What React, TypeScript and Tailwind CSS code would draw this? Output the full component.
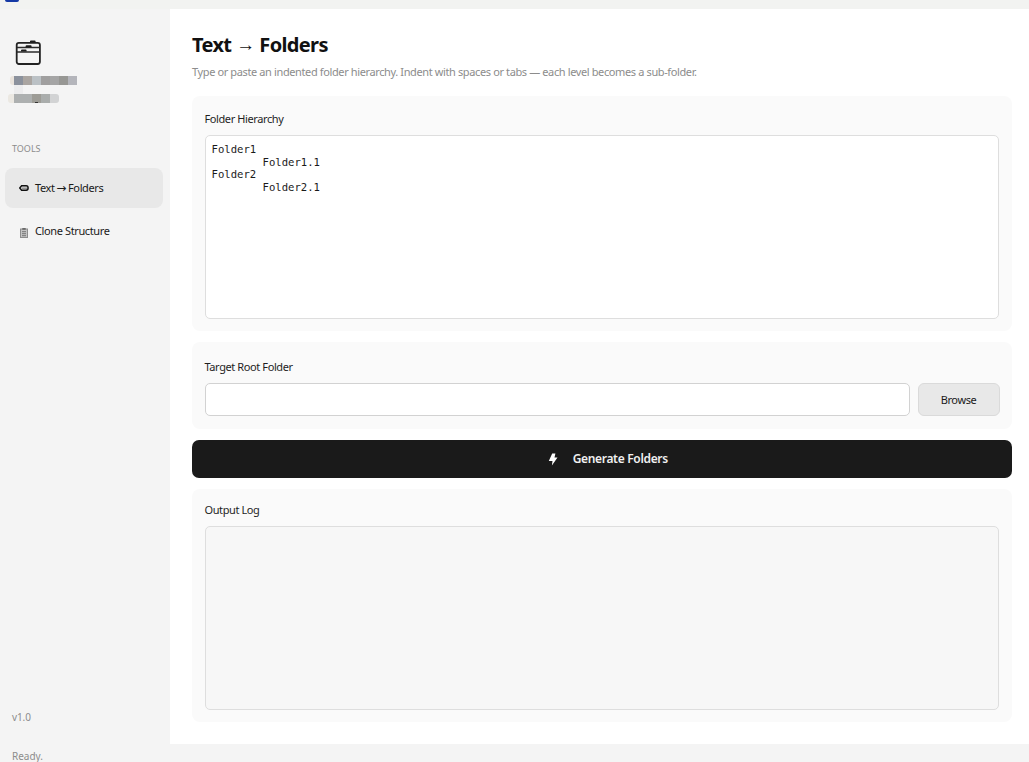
import React, { useState } from 'react';

interface Tool {
    id: string;
    label: React.ReactNode;
    icon: React.ReactNode;
}

interface CardProps {
    title: string;
    className: string;
    children: React.ReactNode;
}

const DividerIcon = () => (
    <svg width="26" height="26" viewBox="0 0 26 26" fill="none" className="mt-[31px] ml-[15px] block">
        <rect x="1.7" y="2.9" width="23.2" height="21.1" rx="2.2" stroke="#222" strokeWidth="1.8"/>
        <path d="M2 7.5h22.6M2 11.9h22.6" stroke="#2a2a2a" strokeWidth="1.5"/>
        <path d="M15 2.4V1.2Q15 .4 16 .4h3.6q1 0 1 .8v1.2zM10.6 7.2v-1q0-.9 1-.9h4q1 0 1 .9v1zM6 11.4v-1q0-.9 1-.9h3.6q1 0 1 .9v1z" fill="#1c1c1c"/>
    </svg>
);

const PencilIcon = () => (
    <svg width="10" height="6" viewBox="0 0 10 6" fill="none">
        <path d="M2.6.8h4.6c1 0 1.9 1 1.9 2.2s-.9 2.2-1.9 2.2H2.6L.7 3z" fill="#d8d8d8" stroke="#111" strokeWidth="1.5"/>
        <path d="M3 3.2h5" stroke="#555" strokeWidth=".7"/>
    </svg>
);

const ClipboardIcon = () => (
    <svg width="8" height="10" viewBox="0 0 8 10" fill="none" className="mt-[3px] ml-px">
        <rect x=".5" y="1" width="7" height="8.5" fill="#c4c4c4" stroke="#8d8d8d"/>
        <path d="M2.3.9h3.4" stroke="#606060" strokeWidth="1.6"/>
        <path d="M2 3.7h4M2 5.7h4M2 7.7h4" stroke="#6d6d6d" strokeWidth=".9"/>
    </svg>
);

const BoltIcon = () => (
    <svg width="10" height="13" viewBox="0 0 10 13">
        <path d="M4.2.5h3.2L6.5 4.6h3L3.9 12.6l.6-4.7H.8z" fill="#fff"/>
    </svg>
);

const tools: Tool[] = [
    {
        id: 'text',
        label: <>Text <span className="mx-[-0.8px] inline-block font-['DejaVu_Sans',sans-serif] text-[12px] leading-none tracking-normal">→</span> Folders</>,
        icon: <PencilIcon/>,
    },
    { id: 'clone', label: 'Clone Structure', icon: <ClipboardIcon/> },
];

const Card: React.FC<CardProps> = ({ title, className, children }) => (
    <section className={`rounded-[8px] bg-[#fafafa] px-[12.5px] ${className}`}>
        <h2 className="h-4 text-[11px] leading-4 tracking-[-0.4px] text-[#1f1f1f]">{title}</h2>
        {children}
    </section>
);

const Brand = () => (
    <div className="mt-[10px] h-[27px]">
        <div className="ml-[10px] flex h-[9px] w-[67px] overflow-hidden rounded-l-[3px]">
            <span className="w-1 bg-[#e9e3dc]"/>
            <span className="w-[9px] bg-[#8b919c]"/>
            <span className="w-[9px] bg-[#aaa5a1]"/>
            <span className="w-[9px] bg-[#bbc1c5]"/>
            <span className="w-[9px] bg-[#a09f9f]"/>
            <span className="w-[9px] bg-[#a5a5a5]"/>
            <span className="w-[9px] bg-[#979794]"/>
            <span className="w-[9px] bg-[#b4b5bb]"/>
        </div>
        <div className="ml-[14px] h-[9px] w-[9px] bg-[#ececed]"/>
        <div className="ml-[8px] flex h-[9px] w-[51px] overflow-hidden rounded-[3px]">
            <span className="w-[6px] bg-[#ebe8e2]"/>
            <span className="w-[18px] bg-[#adb0b0]"/>
            <span className="flex w-[9px] items-end justify-center bg-[#9d9c96]">
                <span className="h-px w-[3px] bg-[#333]"/>
            </span>
            <span className="w-[9px] bg-[#aaadac]"/>
            <span className="w-[9px] bg-[#d2d3d4]"/>
        </div>
    </div>
);

const App: React.FC = () => {
    const [active, setActive] = useState<string>('text');
    const [hierarchy, setHierarchy] = useState<string>('Folder1\n\tFolder1.1\nFolder2\n\tFolder2.1');
    const [target, setTarget] = useState<string>('');

    return (
        <div className="flex h-[762px] w-[1029px] flex-col overflow-hidden bg-[#f4f4f4] font-['Noto_Sans','Open_Sans',sans-serif] text-[#1a1a1a]">
            <div className="h-[9px] shrink-0 bg-[#f2f3f1]">
                <div className="ml-[5px] h-[2px] w-[14px] rounded-b-[2px] bg-[#1539a5]"/>
            </div>
            <div className="flex h-[735px] shrink-0">
                <aside className="flex w-[170px] shrink-0 flex-col">
                    <DividerIcon/>
                    <Brand/>
                    <div className="mt-[38px] ml-3 h-4 text-[9px] leading-4 text-[#8c8c8c]">TOOLS</div>
                    <nav className="mt-[11px] ml-[5px] flex w-[158px] flex-col gap-[3px]">
                        {tools.map((tool) => (
                            <button
                                key={tool.id}
                                onClick={() => setActive(tool.id)}
                                className={`flex h-10 items-center rounded-[8px] pl-[14px] text-[11px] tracking-[-0.38px] ${active === tool.id ? 'bg-[#e8e8e8]' : ''}`}
                            >
                                <span className="flex w-4 items-center">{tool.icon}</span>
                                <span className="whitespace-nowrap">{tool.label}</span>
                            </button>
                        ))}
                    </nav>
                    <div className="mt-auto mb-[19px] ml-3 h-4 text-[10px] leading-4 tracking-[-0.1px] text-[#8c8c8c]">v1.0</div>
                </aside>
                <main className="flex w-[859px] flex-col bg-white pr-[17.5px] pl-[22px]">
                    <h1 className="mt-[22px] flex h-7 items-center text-[20px] leading-7 font-bold tracking-[-0.65px] text-[#111]">
                        <span>Text</span>
                        <span className="mr-[4px] ml-[5px] font-['Liberation_Sans',sans-serif] text-[19px] font-normal tracking-normal">→</span>
                        <span>Folders</span>
                    </h1>
                    <p className="mt-[5px] h-4 text-[11px] leading-4 tracking-[-0.38px] whitespace-nowrap text-[#8c8c8c]">
                        Type or paste an indented folder hierarchy. Indent with spaces or tabs — each level becomes a sub-folder.
                    </p>
                    <Card title="Folder Hierarchy" className="mt-4 h-[235px] pt-[15px]">
                        <textarea
                            value={hierarchy}
                            onChange={(e) => setHierarchy(e.target.value)}
                            spellCheck={false}
                            className="mt-2 block h-[184px] w-full resize-none rounded-[5px] border border-[#dedede] bg-white px-[6px] py-[7px] font-['DejaVu_Sans_Mono',monospace] text-[10.6px] leading-[12.7px] outline-none [tab-size:8]"
                        />
                    </Card>
                    <Card title="Target Root Folder" className="mt-[11px] h-[87px] pt-[17px]">
                        <div className="mt-2 flex w-[795px] gap-2">
                            <input
                                value={target}
                                onChange={(e) => setTarget(e.target.value)}
                                className="h-[33px] w-[705px] rounded-[5px] border-[1.5px] border-[#d2d2d2] bg-white px-2 text-[11px] outline-none"
                            />
                            <button className="h-[33px] w-[82px] rounded-[6px] border border-[#dadada] bg-[#e8e8e8] pt-px text-[11px] tracking-[-0.4px]">Browse</button>
                        </div>
                    </Card>
                    <button className="mt-[11px] flex h-[38px] shrink-0 items-center justify-center gap-[15px] rounded-[7px] bg-[#1a1a1a] pl-[12px] text-[12px] font-semibold tracking-[-0.32px] text-[#f0f0f0]">
                        <BoltIcon/>
                        <span>Generate Folders</span>
                    </button>
                    <Card title="Output Log" className="mt-[11px] h-[233px] pt-[13px]">
                        <div className="mt-2 h-[184px] w-full rounded-[5px] border border-[#dedede] bg-[#f7f7f7]"/>
                    </Card>
                </main>
            </div>
            <footer className="mt-[4px] ml-3 h-[14px] shrink-0 text-[10px] leading-[16px] text-[#8c8c8c]">Ready.</footer>
        </div>
    );
}

export default App;
